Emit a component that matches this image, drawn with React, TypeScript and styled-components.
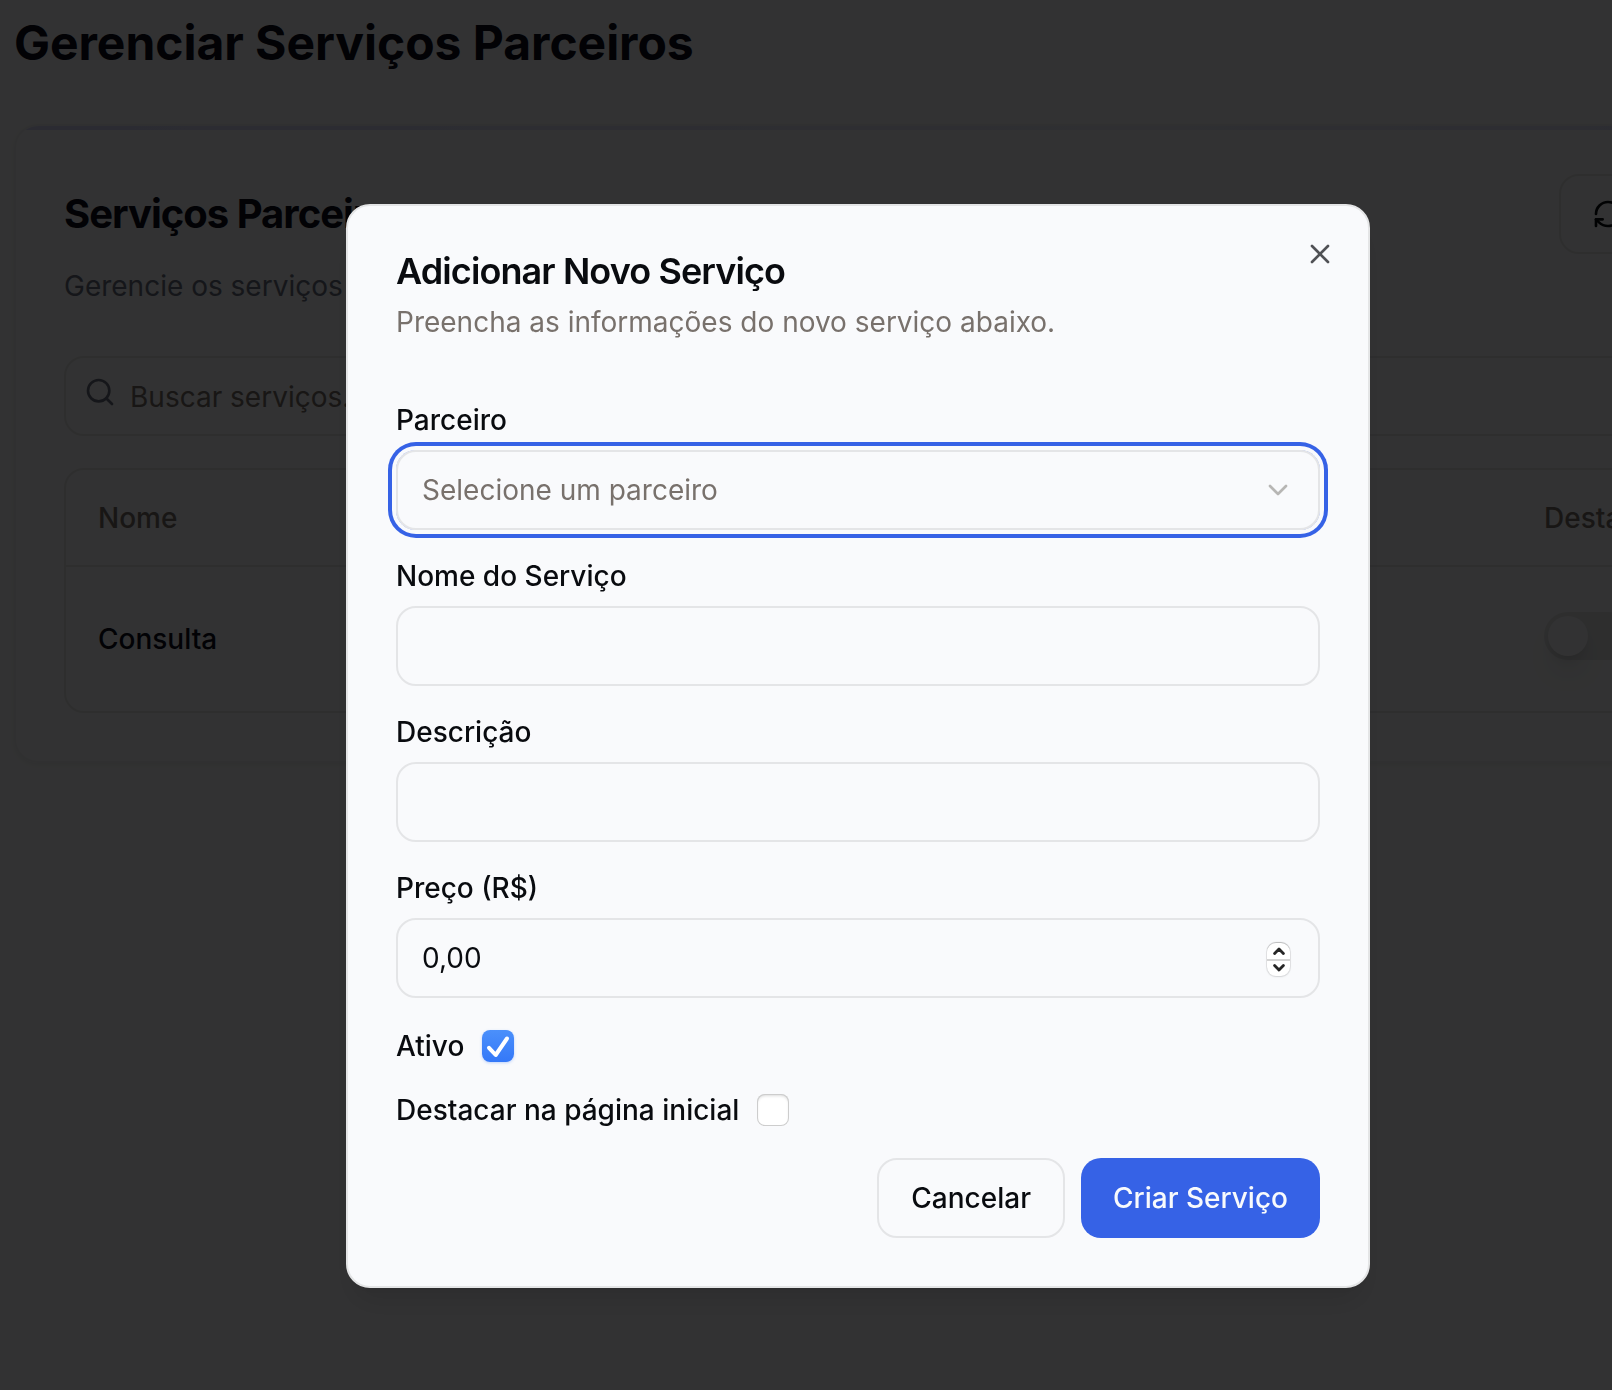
import React, { useState } from "react";
import styled, { createGlobalStyle, css } from "styled-components";
import { ChevronDown, RefreshCw, Search, X } from "lucide-react";

const color = {
  background: "#f9fafc",
  foreground: "#090b0f",
  heading: "#0a0c1c",
  muted: "#78716c",
  subtle: "#6b7080",
  border: "#e4e5e7",
  primary: "#3662e6",
  onPrimary: "#f8fafc",
};

const GlobalStyle = createGlobalStyle`
  *, *::before, *::after { box-sizing: border-box; }
  html, body { margin: 0; padding: 0; }
  body {
    height: 1390px;
    overflow: hidden;
    background: ${color.background};
    color: ${color.foreground};
    font-family: Inter, "Liberation Sans", sans-serif;
    font-size: 28px;
    line-height: 40px;
    -webkit-font-smoothing: antialiased;
  }
  h1, h2, h3, p { margin: 0; }
  button, input { font: inherit; letter-spacing: inherit; color: inherit; }
`;

/* ---------- page behind the dialog ---------- */

const Page = styled.main`
  display: flex;
  flex-direction: column;
  gap: 49px;
  width: 1900px;
  padding: 11px 0 0 14px;
`;

const PageTitle = styled.h1`
  color: ${color.heading};
  font-size: 48px;
  line-height: 64px;
  font-weight: 700;
  letter-spacing: -0.04px;
`;

const Card = styled.section`
  position: relative;
  display: flex;
  flex-direction: column;
  gap: 32px;
  padding: 48px;
  border: 2px solid #f0f1f3;
  border-radius: 24px;
  overflow: hidden;
  box-shadow: 0 2px 4px rgba(0, 0, 0, 0.06);
`;

const CardAccent = styled.div`
  position: absolute;
  inset: 0 0 auto 0;
  height: 4px;
  background: linear-gradient(90deg, #d6d6fa 0, #e9eafb 1130px, #d6d6fa 1880px);
`;

const CardHeader = styled.header`
  display: flex;
  align-items: flex-start;
  padding-bottom: 18px;
`;

const CardHeading = styled.div`
  display: flex;
  flex-direction: column;
  gap: 32px;
  width: 1495px;
  padding-top: 20px;
`;

const CardTitle = styled.h2`
  color: ${color.heading};
  font-size: 40px;
  line-height: 40px;
  font-weight: 700;
  letter-spacing: -0.025em;
`;

const CardText = styled.p`
  color: ${color.subtle};
`;

const boxed = css`
  border: 2px solid ${color.border};
  border-radius: 20px;
`;

const RefreshButton = styled.button`
  ${boxed}
  display: flex;
  align-items: center;
  gap: 16px;
  height: 80px;
  padding: 0 31px;
  background: transparent;
  font-weight: 500;
`;

const SearchBox = styled.label`
  ${boxed}
  display: flex;
  align-items: center;
  gap: 14px;
  height: 80px;
  padding: 0 18px;
  color: ${color.muted};

  svg { color: ${color.subtle}; margin-bottom: 8px; }
`;

const SearchInput = styled.input`
  flex: 1;
  padding: 2px 0 0;
  border: 0;
  outline: 0;
  background: transparent;
  &::placeholder { color: ${color.muted}; opacity: 1; }
`;

const Table = styled.div`
  ${boxed}
  overflow: hidden;
`;

const Row = styled.div<{ $head?: boolean }>`
  display: grid;
  grid-template-columns: 1446px 1fr;
  align-items: center;
  height: ${(p) => (p.$head ? 97 : 144)}px;
  color: ${(p) => (p.$head ? color.muted : color.heading)};
  border-bottom: ${(p) => (p.$head ? `2px solid ${color.border}` : "0")};
  font-weight: 500;
`;

const Cell = styled.div`
  padding: 0 32px;
`;

const Switch = styled.div`
  width: 88px;
  height: 48px;
  margin-bottom: 6px;
  padding: 4px;
  border-radius: 24px;
  background: ${color.border};
`;

const SwitchThumb = styled.div`
  width: 40px;
  height: 40px;
  border-radius: 50%;
  background: ${color.background};
  box-shadow: 0 20px 30px -6px rgba(0, 0, 0, 0.1), 0 8px 12px -4px rgba(0, 0, 0, 0.1);
`;

/* ---------- dialog ---------- */

const Overlay = styled.div`
  position: fixed;
  inset: 0;
  padding: 204px 0 0 346px;
  background: rgba(0, 0, 0, 0.8);
`;

const Dialog = styled.div`
  position: relative;
  display: flex;
  flex-direction: column;
  gap: 32px;
  width: 1024px;
  padding: 48px;
  border: 2px solid #e4e5e6;
  border-radius: 24px;
  background: ${color.background};
  box-shadow: 0 20px 30px -6px rgba(0, 0, 0, 0.1), 0 8px 12px -8px rgba(0, 0, 0, 0.1);
`;

const DialogHeader = styled.header`
  display: flex;
  flex-direction: column;
  gap: 13px;
  padding-bottom: 32px;
`;

const DialogTitle = styled.h2`
  margin-top: -1px;
  font-size: 36px;
  line-height: 36px;
  font-weight: 600;
  letter-spacing: -0.025em;
`;

const DialogText = styled.p`
  color: ${color.muted};
`;

const CloseButton = styled.button`
  position: absolute;
  top: 32px;
  right: 32px;
  display: flex;
  padding: 0;
  border: 0;
  background: transparent;
  opacity: 0.7;
`;

const Field = styled.div`
  display: flex;
  flex-direction: column;
  gap: 16px;
`;

const Label = styled.label`
  line-height: 28px;
  font-weight: 500;
`;

const Control = styled.div<{ $focused?: boolean }>`
  ${boxed}
  display: flex;
  align-items: center;
  justify-content: space-between;
  height: 80px;
  padding: 0 24px;
  ${(p) =>
    p.$focused &&
    css`
      box-shadow: 0 0 0 4px ${color.background}, 0 0 0 8px ${color.primary};
    `}
`;

const Placeholder = styled.span`
  color: ${color.muted};
`;

const Chevron = styled(ChevronDown)`
  color: #78756f;
  opacity: 0.5;
`;

const TextInput = styled.input`
  flex: 1;
  min-width: 0;
  padding: 0;
  border: 0;
  outline: 0;
  background: transparent;
`;

const Stepper = styled.div`
  display: flex;
  flex-direction: column;
  width: 23px;
  height: 33px;
  margin: 3px 4px 0 0;
  border-radius: 9px;
  background: #fff;
  box-shadow: 0 0 0 1px rgba(0, 0, 0, 0.06), 0 -1px 1px rgba(0, 0, 0, 0.2), 0 1px 2px rgba(0, 0, 0, 0.1);
`;

const StepButton = styled.button`
  display: flex;
  flex: 1;
  align-items: center;
  justify-content: center;
  padding: 1px 0 0;
  border: 0;
  background: transparent;
  color: #262626;
  & + & { padding: 0 0 1px; border-top: 2px solid #d4d4d4; }
`;

const CheckRow = styled.div`
  display: flex;
  align-items: center;
  gap: 18px;
  height: 32px;
`;

const CheckBox = styled.button<{ $on: boolean }>`
  display: flex;
  align-items: center;
  justify-content: center;
  width: 32px;
  height: 32px;
  padding: 0;
  border: 0;
  border-radius: 8px;
  ${(p) =>
    p.$on
      ? css`
          background: linear-gradient(#4b90fb, #3478f8);
          box-shadow: 0 1px 3px rgba(52, 120, 248, 0.3);
        `
      : css`
          background: #fff;
          box-shadow: inset 0 0 0 1px #cdcdcd, inset 0 2px 3px rgba(0, 0, 0, 0.14);
        `}
`;

const DialogFooter = styled.footer`
  display: flex;
  justify-content: flex-end;
  gap: 16px;
`;

const ActionButton = styled.button<{ $primary?: boolean }>`
  height: 80px;
  padding: 0 32px;
  border-radius: 20px;
  border: ${(p) => (p.$primary ? "0" : `2px solid ${color.border}`)};
  background: ${(p) => (p.$primary ? color.primary : "transparent")};
  color: ${(p) => (p.$primary ? color.onPrimary : color.foreground)};
  font-weight: 500;
`;

function StepIcon({ down }: { down?: boolean }) {
  return (
    <svg width="12" height="8" viewBox="0 0 12 8" fill="none" stroke="currentColor" strokeWidth="2.8" strokeLinecap="round" strokeLinejoin="round">
      <path d={down ? "M1.6 1.5 6 6 10.4 1.5" : "M1.6 6.5 6 2 10.4 6.5"} />
    </svg>
  );
}

function Check({ label, initial }: { label: string; initial: boolean }) {
  const [on, setOn] = useState(initial);
  return (
    <CheckRow>
      <Label>{label}</Label>
      <CheckBox type="button" role="checkbox" aria-checked={on} $on={on} onClick={() => setOn(!on)}>
        {on && (
          <svg width="32" height="32" viewBox="0 0 32 32" fill="none" stroke="#fff" strokeWidth="4" strokeLinecap="round" strokeLinejoin="round">
            <path d="M7 17.8 13.7 25 25 8.5" />
          </svg>
        )}
      </CheckBox>
    </CheckRow>
  );
}

export default function App() {
  return (
    <>
      <GlobalStyle />
      <Page>
        <PageTitle>Gerenciar Serviços Parceiros</PageTitle>
        <Card>
          <CardAccent />
          <CardHeader>
            <CardHeading>
              <CardTitle>Serviços Parceiros</CardTitle>
              <CardText>Gerencie os serviços</CardText>
            </CardHeading>
            <RefreshButton type="button">
              <RefreshCw size={32} />
            </RefreshButton>
          </CardHeader>
          <SearchBox>
            <Search size={32} />
            <SearchInput placeholder="Buscar serviços..." />
          </SearchBox>
          <Table>
            <Row $head>
              <Cell>Nome</Cell>
              <Cell>Destaque</Cell>
            </Row>
            <Row>
              <Cell>Consulta</Cell>
              <Cell>
                <Switch>
                  <SwitchThumb />
                </Switch>
              </Cell>
            </Row>
          </Table>
        </Card>
      </Page>

      <Overlay>
        <Dialog role="dialog">
          <DialogHeader>
            <DialogTitle>Adicionar Novo Serviço</DialogTitle>
            <DialogText>Preencha as informações do novo serviço abaixo.</DialogText>
          </DialogHeader>
          <Field>
            <Label>Parceiro</Label>
            <Control $focused>
              <Placeholder>Selecione um parceiro</Placeholder>
              <Chevron size={32} />
            </Control>
          </Field>
          <Field>
            <Label>Nome do Serviço</Label>
            <Control>
              <TextInput />
            </Control>
          </Field>
          <Field>
            <Label>Descrição</Label>
            <Control>
              <TextInput />
            </Control>
          </Field>
          <Field>
            <Label>Preço (R$)</Label>
            <Control>
              <TextInput defaultValue="0,00" />
              <Stepper>
                <StepButton type="button">
                  <StepIcon />
                </StepButton>
                <StepButton type="button">
                  <StepIcon down />
                </StepButton>
              </Stepper>
            </Control>
          </Field>
          <Check label="Ativo" initial />
          <Check label="Destacar na página inicial" initial={false} />
          <DialogFooter>
            <ActionButton type="button">Cancelar</ActionButton>
            <ActionButton type="button" $primary>
              Criar Serviço
            </ActionButton>
          </DialogFooter>
          <CloseButton type="button" aria-label="Fechar">
            <X size={32} />
          </CloseButton>
        </Dialog>
      </Overlay>
    </>
  );
}
